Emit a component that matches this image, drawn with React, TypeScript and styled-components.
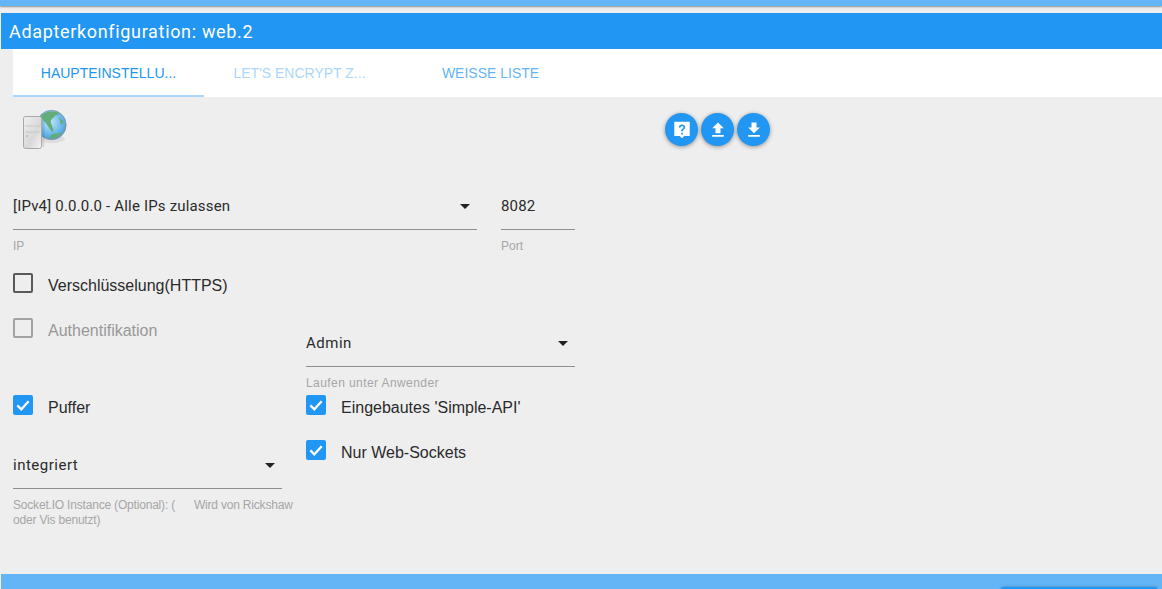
import React from 'react';
import styled, { createGlobalStyle } from 'styled-components';

const GlobalStyle = createGlobalStyle`
  html, body {
    margin: 0;
    padding: 0;
    height: 589px;
    overflow: hidden;
    background: #eeeeee;
    font-family: "Liberation Sans", Arial, sans-serif;
  }
`;

const Page = styled.div`
  width: 1162px;
  height: 589px;
  overflow: hidden;
  display: flex;
  flex-direction: column;
  background: #eeeeee;
`;

const TopStrip = styled.div`
  height: 6px;
  flex: none;
  background: #64b5f6;
  box-shadow: 0 1px 2px rgba(0, 0, 0, 0.4);
`;

const Dialog = styled.div`
  flex: 1;
  display: flex;
  flex-direction: column;
  min-height: 0;
  padding: 7px 0 0 1px;
`;

const TitleBar = styled.div`
  height: 36px;
  flex: none;
  display: flex;
  align-items: center;
  padding-left: 8px;
  background: #2196f3;
  color: #fff;
  font-family: Roboto, sans-serif;
  font-size: 18px;
  letter-spacing: 0.67px;
`;

const Content = styled.div`
  flex: 1;
  min-height: 0;
  padding-left: 12px;
`;

const Tabs = styled.div`
  height: 48px;
  display: flex;
  background: #fff;
`;

const Tab = styled.div<{ $active?: boolean; $disabled?: boolean }>`
  width: 191px;
  box-sizing: border-box;
  padding-top: 16px;
  text-align: center;
  font-size: 14px;
  line-height: 16px;
  white-space: nowrap;
  color: ${(p) => (p.$active ? '#2196f3' : '#64b5f6')};
  opacity: ${(p) => (p.$disabled ? 0.55 : 1)};
  border-bottom: 2px solid ${(p) => (p.$active ? '#a9d7fb' : 'transparent')};
`;

const Toolbar = styled.div`
  height: 93px;
  display: flex;
  align-items: flex-start;
`;

const LogoBox = styled.div`
  width: 652px;
  padding: 11px 0 0 8px;
  box-sizing: border-box;
`;

const RoundButtons = styled.div`
  display: flex;
  gap: 3px;
  padding-top: 16px;
`;

const RoundButton = styled.div`
  width: 33px;
  height: 33px;
  border-radius: 50%;
  background: #2196f3;
  display: flex;
  align-items: center;
  justify-content: center;
  box-shadow: 0 1px 4px rgba(0, 0, 0, 0.4);

  svg {
    width: 20px;
    height: 20px;
    fill: #fff;
  }
`;

const Form = styled.div`
  width: 562px;
`;

const AddressRow = styled.div`
  display: grid;
  grid-template-columns: 464px 74px;
  column-gap: 24px;
`;

const Columns = styled.div`
  display: grid;
  grid-template-columns: 269px 269px;
  column-gap: 24px;
`;

const Column = styled.div`
  display: flex;
  flex-direction: column;
`;

const Field = styled.div<{ $top?: number }>`
  margin-top: ${(p) => p.$top ?? 0}px;
`;

const FieldValue = styled.div<{ $tight?: boolean }>`
  height: 40px;
  box-sizing: border-box;
  display: flex;
  align-items: center;
  justify-content: space-between;
  padding: 0 7px 8px 0;
  border-bottom: 1px solid #8f8f8f;
  font-family: Roboto, sans-serif;
  font-size: 15px;
  letter-spacing: ${(p) => (p.$tight ? 0.18 : 0.5)}px;
  color: #2b2b2b;
`;

const Caret = styled.span`
  width: 0;
  height: 0;
  border-left: 5.5px solid transparent;
  border-right: 5.5px solid transparent;
  border-top: 5px solid #222;
  margin-top: 1px;
`;

const HelperText = styled.div<{ $spacing?: number }>`
  margin-top: 9px;
  font-size: 12px;
  line-height: 15px;
  white-space: nowrap;
  letter-spacing: ${(p) => p.$spacing ?? 0}px;
  color: #a6a6a6;
`;

const CheckRow = styled.div<{ $top?: number; $disabled?: boolean }>`
  display: flex;
  align-items: center;
  height: 20px;
  margin-top: ${(p) => p.$top ?? 0}px;
  color: ${(p) => (p.$disabled ? '#989898' : '#2b2b2b')};
  font-size: 16px;
`;

const CheckLabel = styled.span`
  margin-top: 6px;
`;

const Box = styled.span<{ $checked?: boolean; $disabled?: boolean }>`
  width: 20px;
  height: 20px;
  box-sizing: border-box;
  flex: none;
  margin-right: 15px;
  border-radius: 2px;
  display: flex;
  align-items: center;
  justify-content: center;
  background: ${(p) => (p.$checked ? '#2196f3' : 'transparent')};
  border: ${(p) =>
    p.$checked ? 'none' : `2px solid ${p.$disabled ? '#a3a3a3' : '#5a5a5a'}`};
  svg {
    width: 16px;
    height: 16px;
  }
`;

const BottomBar = styled.div`
  height: 15px;
  flex: none;
  padding: 13px 5px 0 0;
  box-sizing: border-box;
  display: flex;
  justify-content: flex-end;
  background: #64b5f6;
  overflow: hidden;
`;

const SaveButton = styled.div`
  width: 156px;
  height: 30px;
  border-radius: 2px;
  background: #2196f3;
  box-shadow: 0 0 3px rgba(0, 0, 0, 0.3);
`;

const ServerGlobe = () => (
  <svg width="48" height="44" viewBox="0 0 48 44">
    <defs>
      <radialGradient id="sea" cx="0.45" cy="0.4" r="0.75">
        <stop offset="0" stopColor="#bfe6fa" />
        <stop offset="0.6" stopColor="#64b4e8" />
        <stop offset="1" stopColor="#3a7cac" />
      </radialGradient>
      <linearGradient id="tower" x1="0" y1="0" x2="1" y2="1">
        <stop offset="0" stopColor="#f0f0f0" />
        <stop offset="0.6" stopColor="#d8d8d8" />
        <stop offset="1" stopColor="#f6f6f6" />
      </linearGradient>
    </defs>
    <ellipse cx="30" cy="31" rx="14" ry="4" fill="#000" opacity="0.07" />
    <circle cx="30.5" cy="17" r="14.7" fill="url(#sea)" stroke="#8a97a2" strokeWidth="0.8" />
    <path d="M19 9 C24 3 33 2 39 6 C36 7 34 7 33 9 C31 11 29 12 30 15 C31 19 33 20 32 24 C29 23 27 17 24 14 C22 12 21 10 19 9 Z" fill="#62ad7a" />
    <path d="M29 28 C32 25 37 25 41 25 C38 29 34 31 30 31 Z" fill="#62ad7a" />
    <path d="M38 9 L43 14 L40 17 Z" fill="#62ad7a" />
    <rect x="20.5" y="12" width="3" height="27" fill="#000" opacity="0.08" />
    <rect x="2.5" y="8.5" width="18" height="32" rx="2" fill="url(#tower)" stroke="#a8a8a8" />
    <path d="M4 18 H19 M4 24 H19" stroke="#c2c2c2" strokeWidth="0.8" />
    <circle cx="6" cy="28" r="1.2" fill="#c0c0c0" />
  </svg>
);

const CheckMark = () => (
  <svg viewBox="0 0 24 24" fill="none" stroke="#fff" strokeWidth="3.4">
    <path d="M3.5 12.5 L9.5 18.5 L20.5 6.5" />
  </svg>
);

const Check: React.FC<{ label: string; checked?: boolean; disabled?: boolean; top?: number }> = ({
  label,
  checked,
  disabled,
  top,
}) => (
  <CheckRow $top={top} $disabled={disabled}>
    <Box $checked={checked} $disabled={disabled}>
      {checked && <CheckMark />}
    </Box>
    <CheckLabel>{label}</CheckLabel>
  </CheckRow>
);

const Select: React.FC<{
  value: string;
  helper: React.ReactNode;
  top?: number;
  tight?: boolean;
  helperSpacing?: number;
}> = ({ value, helper, top, tight, helperSpacing }) => (
  <Field $top={top}>
    <FieldValue $tight={tight}>
      {value}
      <Caret />
    </FieldValue>
    <HelperText $spacing={helperSpacing}>{helper}</HelperText>
  </Field>
);

export default function App() {
  return (
    <Page>
      <GlobalStyle />
      <TopStrip />
      <Dialog>
        <TitleBar>Adapterkonfiguration: web.2</TitleBar>
        <Content>
          <Tabs>
            <Tab $active>HAUPTEINSTELLU...</Tab>
            <Tab $disabled>LET'S ENCRYPT Z...</Tab>
            <Tab>WEISSE LISTE</Tab>
          </Tabs>
          <Toolbar>
            <LogoBox>
              <ServerGlobe />
            </LogoBox>
            <RoundButtons>
              <RoundButton>
                <svg viewBox="1 1 22 22">
                  <path d="M3.5 3 H20.5 V18.5 H14.5 L12 21 L9.5 18.5 H3.5 Z M11 15 V17 H13 V15 Z M12 6 C9.8 6 8.5 7.3 8.5 9.3 H10.5 C10.5 8.4 11 8 12 8 C13 8 13.5 8.5 13.5 9.2 C13.5 10.6 11 10.6 11 13.5 H13 C13 11.6 15.5 11.2 15.5 9.1 C15.5 7.2 14 6 12 6 Z" fillRule="evenodd" />
                </svg>
              </RoundButton>
              <RoundButton>
                <svg viewBox="0 0 24 24">
                  <path d="M9 16h6v-6h4l-7-7-7 7h4zm-4 2h14v2H5z" />
                </svg>
              </RoundButton>
              <RoundButton>
                <svg viewBox="0 0 24 24">
                  <path d="M19 9h-4V3H9v6H5l7 7 7-7zM5 18v2h14v-2H5z" />
                </svg>
              </RoundButton>
            </RoundButtons>
          </Toolbar>
          <Form>
            <AddressRow>
              <Select value="[IPv4] 0.0.0.0 - Alle IPs zulassen" helper="IP" tight />
              <Field>
                <FieldValue $tight>8082</FieldValue>
                <HelperText>Port</HelperText>
              </Field>
            </AddressRow>
            <Columns>
              <Column>
                <Check label="Verschlüsselung(HTTPS)" top={19} />
                <Check label="Authentifikation" disabled top={25} />
                <Check label="Puffer" checked top={57} />
                <Select
                  value="integriert"
                  helper={
                    <>
                      Socket.IO Instance (Optional): ({'\u00a0\u00a0\u00a0\u00a0\u00a0\u00a0'}Wird von Rickshaw
                      <br />
                      oder Vis benutzt)
                    </>
                  }
                  helperSpacing={-0.19}
                  top={34}
                />
              </Column>
              <Column>
                <Select value="Admin" helper="Laufen unter Anwender" helperSpacing={0.42} top={73} />
                <Check label="Eingebautes 'Simple-API'" checked top={4} />
                <Check label="Nur Web-Sockets" checked top={25} />
              </Column>
            </Columns>
          </Form>
        </Content>
        <BottomBar>
          <SaveButton />
        </BottomBar>
      </Dialog>
    </Page>
  );
}
